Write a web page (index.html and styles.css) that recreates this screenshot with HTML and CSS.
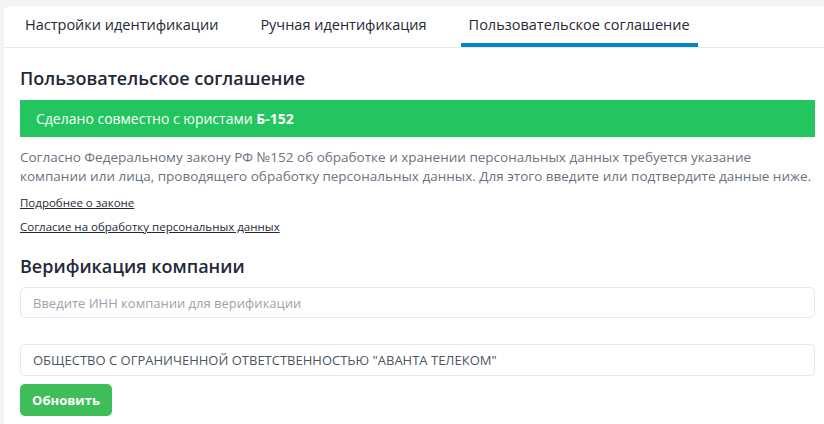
FILE: index.html
```html
<!DOCTYPE html>
<html lang="ru">
<head>
<meta charset="utf-8">
<link rel="stylesheet" href="styles.css">
</head>
<body>
<div class="card">
  <nav class="tabs">
    <a class="tab">Настройки идентификации</a>
    <a class="tab">Ручная идентификация</a>
    <a class="tab active">Пользовательское соглашение</a>
  </nav>
  <div class="content">
    <h2 class="title">Пользовательское соглашение</h2>
    <div class="banner">Сделано совместно с юристами <b>Б-152</b></div>
    <p class="text">Согласно Федеральному закону РФ №152 об обработке и хранении персональных данных требуется указание компании или лица, проводящего обработку персональных данных. Для этого введите или подтвердите данные ниже.</p>
    <a class="link first" href="#">Подробнее о законе</a>
    <a class="link" href="#">Согласие на обработку персональных данных</a>
    <h2 class="title title2">Верификация компании</h2>
    <input class="field" type="text" placeholder="Введите ИНН компании для верификации">
    <input class="field field2" type="text" value="ОБЩЕСТВО С ОГРАНИЧЕННОЙ ОТВЕТСТВЕННОСТЬЮ &quot;АВАНТА ТЕЛЕКОМ&quot;">
    <button class="btn">Обновить</button>
  </div>
</div>
</body>
</html>
```
FILE: styles.css
```css
* { box-sizing: border-box; }
html, body { margin: 0; padding: 0; }
body {
  background: #f3f4f6;
  font-family: "Open Sans", "Noto Sans", sans-serif;
  color: #1f2937;
  height: 424px;
  overflow: hidden;
}
.card {
  margin: 6px 0 0 4px;
  background: #fff;
  border-top-left-radius: 6px;
  min-height: 418px;
}
.tabs {
  display: flex;
  gap: 26px;
  padding-left: 13px;
  height: 42px;
  border-bottom: 1px solid #e5e7eb;
}
.tab {
  display: block;
  padding: 0 8px;
  font-size: 14.5px;
  line-height: 38px;
  height: 41px;
  color: #1f2937;
  border-bottom: 4px solid transparent;
}
.tab.active { border-bottom-color: #0284c7; }
.content { padding: 0 9px 0 16px; }
.title {
  margin: 18px 0 0;
  font-size: 18px;
  font-weight: 600;
  line-height: 24px;
  color: #1f2937;
}
.title2 { margin-top: 19px; }
.banner {
  margin-top: 10px;
  height: 37px;
  line-height: 37px;
  background: #22c55e;
  color: #fff;
  font-size: 14px;
  padding-left: 16px;
}
.banner b { font-weight: 700; }
.text {
  margin: 11px 0 0;
  font-size: 13.5px;
  line-height: 19px;
  color: #6b7280;
}
.link {
  display: block;
  width: max-content;
  margin-top: 8px;
  font-size: 11.5px;
  line-height: 16px;
  color: #1f2937;
  text-decoration: underline;
}
.link.first { margin-top: 9px; }
.field {
  display: block;
  width: 100%;
  margin-top: 9px;
  height: 31px;
  border: 1px solid #e5e7eb;
  border-radius: 5px;
  padding: 0 12px;
  font-family: inherit;
  font-size: 13px;
  color: #4b5563;
  outline: none;
}
.field::placeholder { color: #9ca3af; }
.field2 { margin-top: 26px; height: 32px; }
.btn {
  display: block;
  margin-top: 8px;
  width: 92px;
  height: 32px;
  border: 0;
  border-radius: 5px;
  background: #3dbe58;
  color: #fff;
  font-family: inherit;
  font-size: 13px;
  font-weight: 700;
}
```
